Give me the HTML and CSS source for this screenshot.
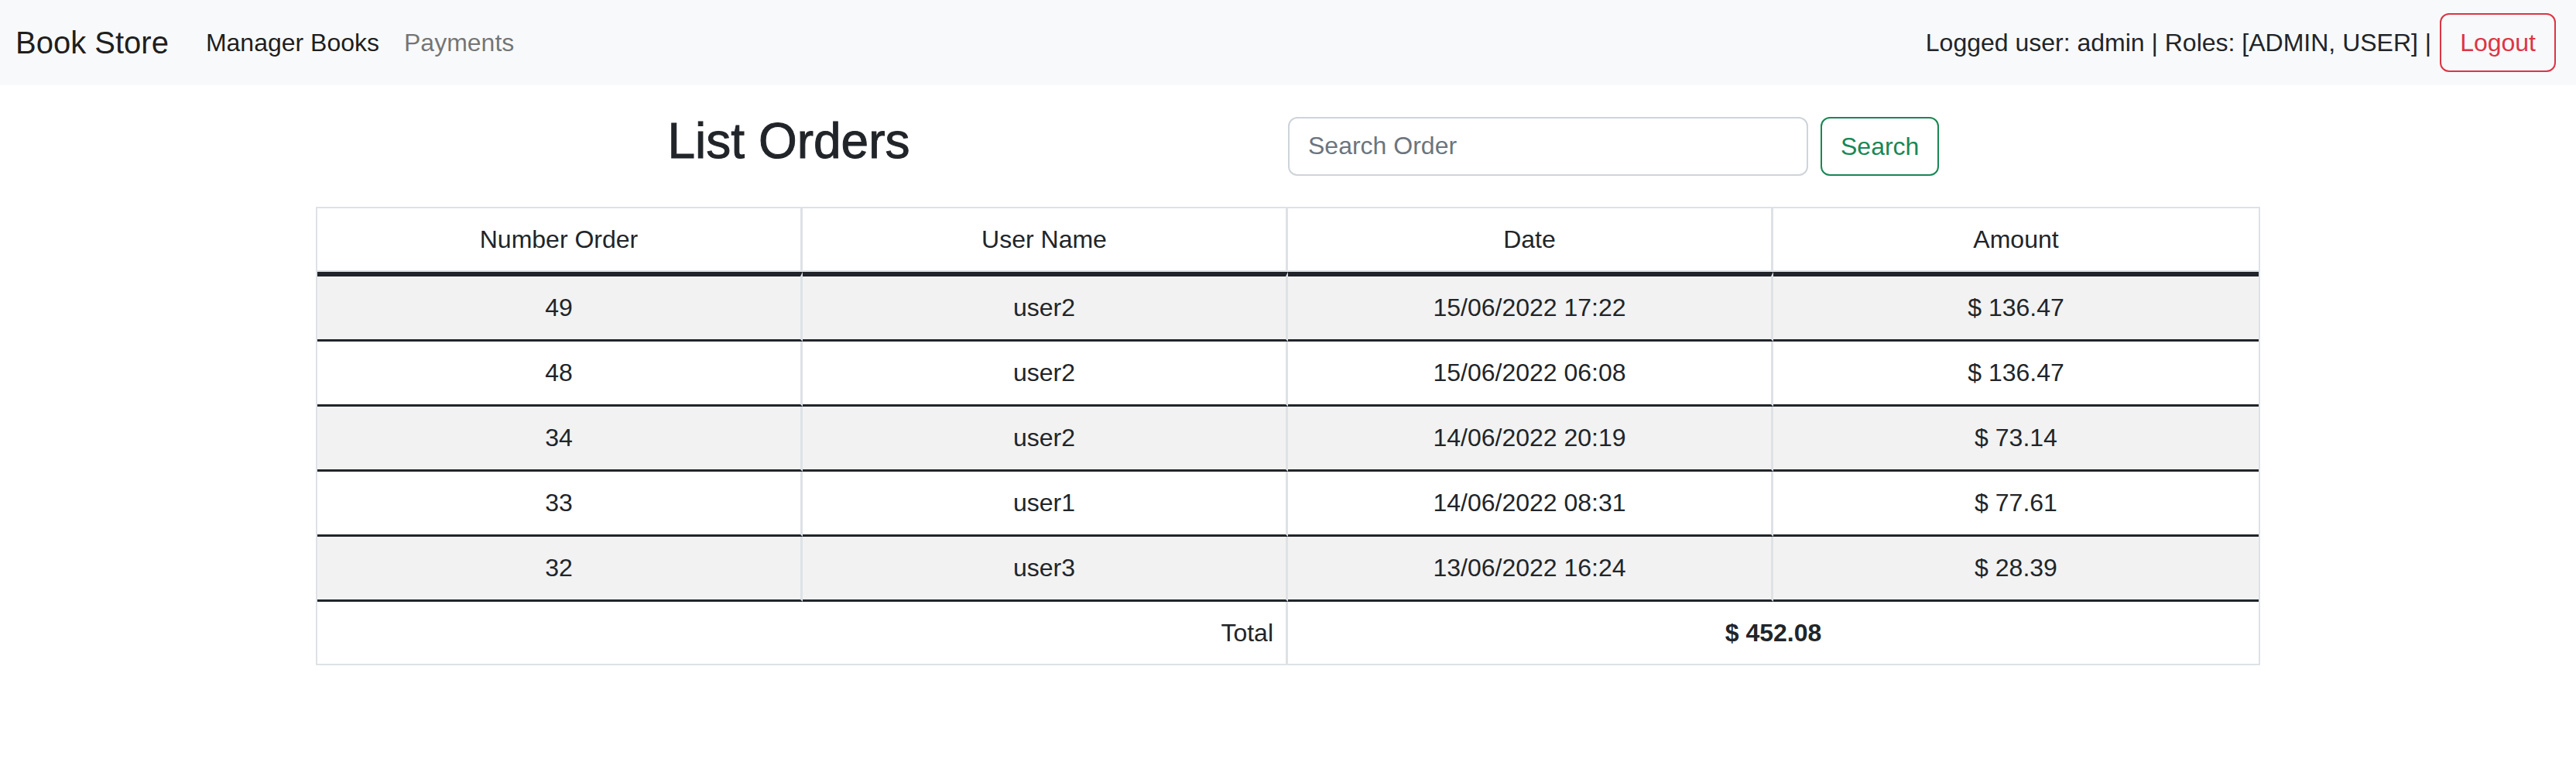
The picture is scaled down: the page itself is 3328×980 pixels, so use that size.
FILE: index.html
```html
<!DOCTYPE html>
<html lang="en">
<head>
<meta charset="utf-8">
<title>Book Store - List Orders</title>
<link rel="stylesheet" href="styles.css">
</head>
<body>
<nav class="navbar">
  <a class="brand" href="#">Book Store</a>
  <ul class="nav">
    <li><a class="nav-link active" href="#">Manager Books</a></li>
    <li><a class="nav-link muted" href="#">Payments</a></li>
  </ul>
  <div class="user-area">
    <span class="user-info">Logged user: admin | Roles: [ADMIN, USER] |</span>
    <button class="btn btn-danger-outline">Logout</button>
  </div>
</nav>

<main class="container">
  <div class="page-head">
    <div class="title-col">
      <h2 class="title">List Orders</h2>
    </div>
    <form class="search-form">
      <input class="search-input" type="text" placeholder="Search Order">
      <button class="btn btn-success-outline" type="button">Search</button>
    </form>
  </div>

  <table class="orders">
    <thead>
      <tr>
        <th>Number Order</th>
        <th>User Name</th>
        <th>Date</th>
        <th>Amount</th>
      </tr>
    </thead>
    <tbody>
      <tr class="striped">
        <td>49</td><td>user2</td><td>15/06/2022 17:22</td><td>$ 136.47</td>
      </tr>
      <tr>
        <td>48</td><td>user2</td><td>15/06/2022 06:08</td><td>$ 136.47</td>
      </tr>
      <tr class="striped">
        <td>34</td><td>user2</td><td>14/06/2022 20:19</td><td>$ 73.14</td>
      </tr>
      <tr>
        <td>33</td><td>user1</td><td>14/06/2022 08:31</td><td>$ 77.61</td>
      </tr>
      <tr class="striped">
        <td>32</td><td>user3</td><td>13/06/2022 16:24</td><td>$ 28.39</td>
      </tr>
    </tbody>
    <tfoot>
      <tr>
        <td colspan="2" class="total-label">Total</td>
        <td colspan="2" class="total-value">$ 452.08</td>
      </tr>
    </tfoot>
  </table>
</main>
</body>
</html>
```

FILE: styles.css
```css
html, body {
  margin: 0;
  padding: 0;
  background: #ffffff;
}

body {
  font-family: "Liberation Sans", Arial, sans-serif;
  font-size: 32px;
  line-height: 1.5;
  color: #212529;
}

a {
  text-decoration: none;
}

/* Navbar */
.navbar {
  display: flex;
  align-items: center;
  height: 110px;
  padding: 0 26px 0 20px;
  background: #f8f9fa;
  box-sizing: border-box;
}

.brand {
  font-size: 40px;
  line-height: 60px;
  color: rgba(0, 0, 0, 0.9);
  margin-right: 32px;
  white-space: nowrap;
}

.nav {
  display: flex;
  list-style: none;
  margin: 0;
  padding: 0;
}

.nav-link {
  display: block;
  padding: 0 16px;
  line-height: 48px;
  white-space: nowrap;
}

.nav-link.active {
  color: rgba(0, 0, 0, 0.9);
}

.nav-link.muted {
  color: rgba(0, 0, 0, 0.55);
}

.user-area {
  margin-left: auto;
  display: flex;
  align-items: center;
}

.user-info {
  white-space: nowrap;
  color: #212529;
}

.btn {
  font-family: inherit;
  font-size: 32px;
  line-height: 48px;
  padding: 12px 24px;
  border-radius: 12px;
  background: transparent;
  cursor: pointer;
  white-space: nowrap;
}

.btn-danger-outline {
  margin-left: 11px;
  color: #dc3545;
  border: 2px solid #dc3545;
}

.btn-success-outline {
  color: #198754;
  border: 2px solid #198754;
}

/* Content */
.container {
  width: 2512px;
  margin: 0 auto;
}

.page-head {
  display: grid;
  grid-template-columns: 1fr 1fr;
  align-items: center;
  margin-top: 34px;
  margin-bottom: 36px;
}

.title-col {
  text-align: center;
  padding-right: 34px;
}

.title {
  margin: 0 0 10px 0;
  font-size: 64px;
  font-weight: 500;
  line-height: 1.2;
  color: #212529;
  -webkit-text-stroke: 1px #212529;
}

.search-form {
  display: flex;
  align-items: center;
  gap: 16px;
  margin: 3px 0 0 0;
}

.search-input {
  width: 672px;
  height: 76px;
  box-sizing: border-box;
  padding: 12px 24px;
  font-family: inherit;
  font-size: 32px;
  line-height: 48px;
  color: #212529;
  border: 2px solid #ced4da;
  border-radius: 12px;
  background: #fff;
  outline: none;
}

.search-input::placeholder {
  color: #6c757d;
}

/* Table */
.orders {
  width: 100%;
  border-collapse: separate;
  border-spacing: 0;
  table-layout: fixed;
  border: 2px solid #dee2e6;
}

.orders th,
.orders td {
  padding: 16px;
  line-height: 48px;
  font-weight: 400;
  text-align: center;
  border-right: 3px solid #dee2e6;
}

.orders th:last-child,
.orders td:last-child {
  border-right: none;
}

.orders thead th {
  border-bottom: 2px solid #dee2e6;
}

.orders tbody tr:first-child td {
  border-top: 6px solid #212529;
}

.orders tbody td {
  padding-bottom: 17px;
  border-bottom: 3px solid #212529;
}

.orders tr.striped td {
  background: #f2f2f2;
}

.orders tfoot td {
  padding-top: 16px;
}

.orders .total-label {
  text-align: right;
}

.orders .total-value {
  font-weight: 700;
}
```
